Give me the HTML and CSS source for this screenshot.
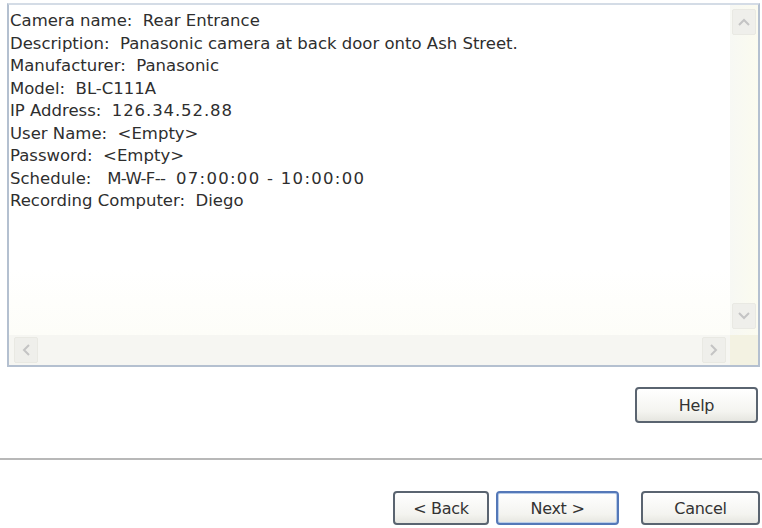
FILE: index.html
```html
<!DOCTYPE html>
<html lang="en">
<head>
    <meta charset="UTF-8">
    <title>Camera Summary</title>
    <link rel="stylesheet" href="styles.css">
</head>
<body>
    <div class="wizard">
        <div class="summary-box">
            <div class="summary-text">
                <div class="line">Camera name:  Rear Entrance</div>
                <div class="line">Description:  Panasonic camera at back door onto Ash Street.</div>
                <div class="line">Manufacturer:  Panasonic</div>
                <div class="line">Model:  BL-C111A</div>
                <div class="line">IP Address:  <span class="num">126.34.52.88</span></div>
                <div class="line">User Name:  &lt;Empty&gt;</div>
                <div class="line">Password:  &lt;Empty&gt;</div>
                <div class="line">Schedule:   <span class="days">M-W-F--</span>  <span class="num wide">07:00:00 - 10:00:00</span></div>
                <div class="line">Recording Computer:  Diego</div>
            </div>
            <div class="vscroll">
                <div class="arrow-btn">
                    <svg width="12" height="8" viewBox="0 0 12 8"><path d="M1 7 L6 2 L11 7" fill="none" stroke="#c4c4c4" stroke-width="2"/></svg>
                </div>
                <div class="arrow-btn">
                    <svg width="12" height="8" viewBox="0 0 12 8"><path d="M1 1 L6 6 L11 1" fill="none" stroke="#c4c4c4" stroke-width="2"/></svg>
                </div>
            </div>
            <div class="hscroll">
                <div class="arrow-btn">
                    <svg width="8" height="12" viewBox="0 0 8 12"><path d="M7 1 L2 6 L7 11" fill="none" stroke="#c4c4c4" stroke-width="2"/></svg>
                </div>
                <div class="arrow-btn">
                    <svg width="8" height="12" viewBox="0 0 8 12"><path d="M1 1 L6 6 L1 11" fill="none" stroke="#c4c4c4" stroke-width="2"/></svg>
                </div>
            </div>
            <div class="corner"></div>
        </div>

        <div class="help-row">
            <button class="btn help-btn">Help</button>
        </div>

        <div class="separator"></div>

        <div class="nav-row">
            <button class="btn back-btn">&lt; Back</button>
            <button class="btn next-btn default">Next &gt;</button>
            <button class="btn cancel-btn">Cancel</button>
        </div>
    </div>
</body>
</html>
```

FILE: styles.css
```css
body {
    margin: 0;
    background-color: #ffffff;
    font-family: 'DejaVu Sans', Verdana, sans-serif;
    color: #333;
}

.wizard {
    width: 762px;
    height: 528px;
    overflow: hidden;
}

.summary-box {
    margin: 3px 2px 0 7px;
    height: 360px;
    border: 2px solid #b4c0d0;
    border-top-color: #d4dce6;
    display: grid;
    grid-template-columns: 1fr 28px;
    grid-template-rows: 1fr 30px;
    background-color: #fff;
}

.summary-text {
    padding: 5px 0 0 1px;
    font-size: 16.5px;
    line-height: 22.5px;
    color: #2e2e2e;
    background: linear-gradient(to bottom, #ffffff 80%, #fdfdf8 100%);
}

.line {
    white-space: pre;
}

/* digits are a little wider in the original font */
.num {
    letter-spacing: 0.9px;
}

.num.wide {
    letter-spacing: 1.3px;
}

.days {
    letter-spacing: -0.6px;
}

.vscroll {
    display: flex;
    flex-direction: column;
    justify-content: space-between;
    align-items: center;
    padding: 4px 0 6px 0;
    background: linear-gradient(to right, #f7f8f4, #fbfbef);
}

.hscroll {
    display: flex;
    justify-content: space-between;
    align-items: center;
    padding: 0 4px 0 5px;
    background-color: #f6f6f2;
}

.corner {
    background-color: #f3f2e2;
}

.arrow-btn {
    width: 22px;
    height: 24px;
    display: flex;
    align-items: center;
    justify-content: center;
    background-color: #efefeb;
    border: 1px solid #e9e9e3;
    border-radius: 2px;
}

.help-row {
    display: flex;
    justify-content: flex-end;
    padding: 20px 4px 0 0;
}

.separator {
    margin-top: 35px;
    height: 0;
    border-top: 2px solid #b8b8b8;
}

.nav-row {
    display: flex;
    justify-content: flex-end;
    padding: 31px 2px 0 0;
}

.btn {
    font-family: 'DejaVu Sans', Verdana, sans-serif;
    font-size: 16px;
    letter-spacing: -0.3px;
    color: #333;
    height: 34px;
    border: 2px solid #5a6470;
    border-radius: 4px;
    background: linear-gradient(to bottom, #ffffff 0%, #f4f4f0 70%, #e6e6e0 100%);
    padding: 0;
}

.help-btn {
    width: 123px;
    height: 36px;
}

.back-btn {
    width: 96px;
}

.next-btn {
    width: 123px;
    margin-left: 7px;
}

.cancel-btn {
    width: 119px;
    margin-left: 22px;
}

.btn.default {
    border-color: #5478b8;
    box-shadow: inset 0 0 0 1px #b8cce8;
}
```
